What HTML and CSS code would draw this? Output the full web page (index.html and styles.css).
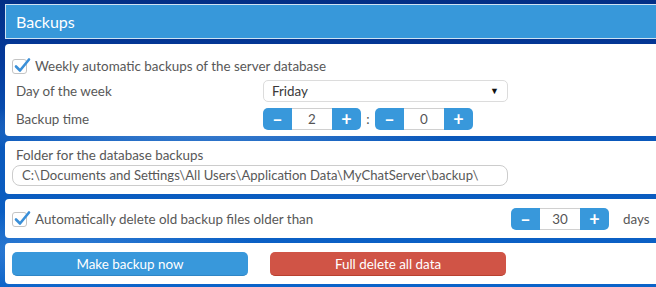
FILE: index.html
```html
<!DOCTYPE html>
<html>
<head>
    <meta charset="utf-8" />
    <link rel="stylesheet" href="styles.css">
</head>
<body>
    <div class="page">
        <div class="title">Backups</div>

        <div class="panel weekly">
            <label class="check">
                <span class="box"><svg width="18" height="18" viewBox="0 0 18 18"><path d="M3 9.5 L7 13.5 L16 2.5" fill="none" stroke="#3a8fd8" stroke-width="2.6" stroke-linecap="round" stroke-linejoin="round"/></svg></span>
                Weekly automatic backups of the server database
            </label>
            <div class="row">
                <span class="label">Day of the week</span>
                <div class="select">Friday<span class="arrow">&#9660;</span></div>
            </div>
            <div class="row">
                <span class="label">Backup time</span>
                <div class="time">
                    <div class="spin">
                        <span class="btn minus">&ndash;</span><span class="val">2</span><span class="btn plus">+</span>
                    </div>
                    <span class="colon">:</span>
                    <div class="spin">
                        <span class="btn minus">&ndash;</span><span class="val">0</span><span class="btn plus">+</span>
                    </div>
                </div>
            </div>
        </div>

        <div class="panel folder">
            <div class="label">Folder for the database backups</div>
            <div class="path">C:\Documents and Settings\All Users\Application Data\MyChatServer\backup\</div>
        </div>

        <div class="panel cleanup">
            <label class="check wide">
                <span class="box"><svg width="18" height="18" viewBox="0 0 18 18"><path d="M3 9.5 L7 13.5 L16 2.5" fill="none" stroke="#3a8fd8" stroke-width="2.6" stroke-linecap="round" stroke-linejoin="round"/></svg></span>
                Automatically delete old backup files older than
            </label>
            <div class="spin">
                <span class="btn minus">&ndash;</span><span class="val">30</span><span class="btn plus">+</span>
            </div>
            <span class="days">days</span>
        </div>

        <div class="panel actions">
            <button class="action blue">Make backup now</button>
            <button class="action red">Full delete all data</button>
        </div>
    </div>
</body>
</html>
```

FILE: styles.css
```css
body {
    margin: 0;
    overflow: hidden;
    font-family: Lato, "Open Sans", sans-serif;
    font-size: 13.4px;
    color: #585858;
    background:
        radial-gradient(ellipse 260px 30px at 200px 128px, rgba(140, 190, 240, 0.45), rgba(140, 190, 240, 0)),
        radial-gradient(ellipse 200px 40px at 60px 250px, rgba(120, 180, 240, 0.35), rgba(120, 180, 240, 0)),
        linear-gradient(180deg, #032f86 0px, #04399a 60px, #0a58bb 140px, #0b63c9 287px);
    height: 287px;
}

.page {
    padding: 4px 0 0 5px;
}

.title {
    height: 33px;
    line-height: 33px;
    border: 1px solid #cfe3f3;
    border-right: none;
    background: #3798da;
    color: #ffffff;
    font-size: 16px;
    padding-left: 10px;
}

.panel {
    background: #ffffff;
    margin-top: 5px;
    border-radius: 4px 0 0 4px;
    padding-left: 7px;
}

.weekly {
    padding-top: 12px;
    padding-bottom: 6px;
}

.check {
    display: flex;
    align-items: center;
    height: 20px;
}

.box {
    width: 13px;
    height: 13px;
    border: 1px solid #c4c4c4;
    border-radius: 3px;
    position: relative;
    margin-right: 8px;
    flex: none;
}

.box svg {
    position: absolute;
    left: 0;
    top: -3px;
}

.row {
    display: flex;
    align-items: center;
    height: 22px;
    margin-top: 4px;
}

.row + .row {
    margin-top: 6px;
}

.row .label {
    width: 247px;
    padding-left: 4px;
}

.select {
    width: 235px;
    height: 20px;
    line-height: 20px;
    border: 1px solid #dcdcdc;
    border-radius: 5px;
    padding-left: 8px;
    color: #3a3a3a;
    position: relative;
}

.arrow {
    position: absolute;
    right: 8px;
    top: 0;
    font-size: 9px;
    color: #111111;
}

.time {
    display: flex;
    align-items: center;
}

.colon {
    width: 14px;
    text-align: center;
    color: #555555;
}

.spin {
    display: flex;
    height: 22px;
}

.btn {
    width: 29px;
    background: #3898db;
    color: #ffffff;
    font-weight: bold;
    font-size: 18px;
    line-height: 22px;
    text-align: center;
}

.minus {
    border-radius: 5px 0 0 5px;
}

.plus {
    border-radius: 0 5px 5px 0;
}

.val {
    width: 40px;
    box-sizing: border-box;
    border-top: 1px solid #d0d0d0;
    border-bottom: 1px solid #d0d0d0;
    text-align: center;
    line-height: 20px;
    color: #555555;
}

.folder {
    padding-top: 6px;
    padding-bottom: 8px;
}

.folder .label {
    padding-left: 4px;
    height: 17px;
    line-height: 17px;
}

.path {
    margin-top: 1px;
    width: 485px;
    height: 19px;
    line-height: 19px;
    border: 1px solid #cccccc;
    border-radius: 8px;
    padding-left: 9px;
    font-size: 13.1px;
    white-space: nowrap;
    overflow: hidden;
}

.cleanup {
    display: flex;
    align-items: center;
    padding-top: 9px;
    padding-bottom: 8px;
}

.check.wide {
    width: 499px;
}

.days {
    margin-left: 14px;
}

.actions {
    display: flex;
    gap: 22px;
    padding-top: 9px;
    padding-bottom: 8px;
}

.action {
    width: 236px;
    height: 24px;
    border: none;
    border-radius: 5px;
    color: #ffffff;
    font-family: Lato, "Open Sans", sans-serif;
    font-size: 13.4px;
    padding: 0;
}

.blue {
    background: #3898db;
    border-bottom: 1px solid #2f86c6;
}

.red {
    background: #d05446;
    border-bottom: 1px solid #b8402f;
}
```
